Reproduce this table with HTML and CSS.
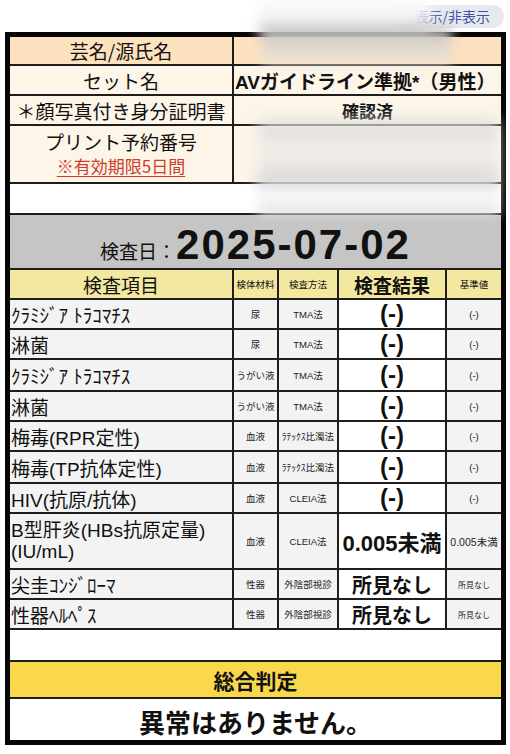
FILE: index.html
```html
<!DOCTYPE html>
<html lang="ja">
<head>
<meta charset="utf-8">
<link rel="stylesheet" href="styles.css">
</head>
<body>
<div class="top">
  <div class="toggle">表示/非表示</div>
</div>
<div class="sheet">
  <div class="grid">
    <div class="c lab peach">芸名/源氏名</div>
    <div class="c val peach span4"></div>

    <div class="c lab cream">セット名</div>
    <div class="c val cream span4 left strong">AVガイドライン準拠*（男性）</div>

    <div class="c lab cream">＊顔写真付き身分証明書</div>
    <div class="c val cream span4 mid">確認済</div>

    <div class="c lab cream stack"><span>プリント予約番号</span><span class="red">※有効期限5日間</span></div>
    <div class="c val cream span4"></div>

    <div class="c blank span5"></div>

    <div class="c date span5"><span class="dlabel">検査日：</span><span class="dval">2025-07-02</span></div>

    <div class="c hd big">検査項目</div>
    <div class="c hd small">検体材料</div>
    <div class="c hd small">検査方法</div>
    <div class="c hd big strong">検査結果</div>
    <div class="c hd small">基準値</div>

    <div class="c name">ｸﾗﾐｼﾞｱ ﾄﾗｺﾏﾁｽ</div><div class="c sm">尿</div><div class="c sm">TMA法</div><div class="c res">(-)</div><div class="c sm">(-)</div>
    <div class="c name">淋菌</div><div class="c sm">尿</div><div class="c sm">TMA法</div><div class="c res">(-)</div><div class="c sm">(-)</div>
    <div class="c name">ｸﾗﾐｼﾞｱ ﾄﾗｺﾏﾁｽ</div><div class="c sm">うがい液</div><div class="c sm">TMA法</div><div class="c res">(-)</div><div class="c sm">(-)</div>
    <div class="c name">淋菌</div><div class="c sm">うがい液</div><div class="c sm">TMA法</div><div class="c res">(-)</div><div class="c sm">(-)</div>
    <div class="c name">梅毒(RPR定性)</div><div class="c sm">血液</div><div class="c sm">ﾗﾃｯｸｽ比濁法</div><div class="c res">(-)</div><div class="c sm">(-)</div>
    <div class="c name">梅毒(TP抗体定性)</div><div class="c sm">血液</div><div class="c sm">ﾗﾃｯｸｽ比濁法</div><div class="c res">(-)</div><div class="c sm">(-)</div>
    <div class="c name">HIV(抗原/抗体)</div><div class="c sm">血液</div><div class="c sm">CLEIA法</div><div class="c res">(-)</div><div class="c sm">(-)</div>
    <div class="c name two">B型肝炎(HBs抗原定量)<br>(IU/mL)</div><div class="c sm">血液</div><div class="c sm">CLEIA法</div><div class="c res num">0.005未満</div><div class="c sm numsm">0.005未満</div>
    <div class="c name">尖圭ｺﾝｼﾞﾛｰﾏ</div><div class="c sm">性器</div><div class="c sm">外陰部視診</div><div class="c res jp">所見なし</div><div class="c sm tiny">所見なし</div>
    <div class="c name">性器ﾍﾙﾍﾟｽ</div><div class="c sm">性器</div><div class="c sm">外陰部視診</div><div class="c res jp">所見なし</div><div class="c sm tiny">所見なし</div>

    <div class="c blank span5"></div>
    <div class="c sogo span5">総合判定</div>
    <div class="c final span5">異常はありません。</div>
  </div>
</div>
<div class="blur b1"></div>
<div class="blur b1b"></div>
<div class="blur b2"></div>
<div class="blur b3"></div>
</body>
</html>
```

FILE: styles.css
```css
* { box-sizing: border-box; }
html, body { margin: 0; padding: 0; background: #fff; }
body {
  position: relative;
  width: 510px;
  height: 754px;
  overflow: hidden;
  font-family: "Liberation Sans", "Noto Sans CJK JP", sans-serif;
  color: #111;
}
.top {
  height: 32px;
  display: flex;
  justify-content: flex-end;
  align-items: center;
  padding-right: 6px;
}
.toggle {
  height: 23px;
  padding: 0 14px 0 22px;
  border-radius: 12px;
  background: #e7e9ef;
  color: #3a52a6;
  font-family: "Noto Sans CJK JP", sans-serif;
  font-size: 14px;
  line-height: 23px;
}
.sheet {
  margin-left: 5px;
  width: 501px;
  border: 5px solid #060606;
}
.grid {
  display: grid;
  grid-template-columns: 222px 43px 58px 106px 54px;
  grid-template-rows: 27px 28px 28px 56px 29px 53px 28px 28px 28px 30px 28px 28px 30px 28px 54px 28px 28px 30px 35px 41px;
  gap: 2px;
  background: #1e1e1e;
}
.c {
  display: flex;
  align-items: center;
  justify-content: center;
  overflow: hidden;
  white-space: nowrap;
  background: #f3f3f3;
}
.span4 { grid-column: span 4; }
.span5 { grid-column: span 5; }
.peach { background: #fce2bf; }
.cream { background: #fdf5e8; }
.lab { font-family: "Noto Sans CJK JP", sans-serif; font-size: 19px; }
.val { font-size: 19px; }
.left { justify-content: flex-start; padding-left: 1px; }
.strong { font-weight: bold; }
.mid { font-weight: bold; font-size: 17px; font-family: "Noto Sans CJK JP", sans-serif; }
.stack { flex-direction: column; line-height: 24px; }
.red {
  color: #cc3e2c;
  font-size: 17px;
  text-decoration: underline;
  text-underline-offset: 3px;
}
.blank { background: #fff; }
.date {
  background: #c5c5c5;
  align-items: baseline;
  padding-top: 8px;
}
.dlabel { font-family: "Noto Sans CJK JP", sans-serif; font-size: 19px; }
.dval {
  font-size: 42px;
  font-weight: bold;
  letter-spacing: 2px;
  line-height: 44px;
}
.hd { background: #f3e8a0; }
.big { font-family: "Noto Sans CJK JP", sans-serif; font-size: 19px; }
.small { font-family: "Noto Sans CJK JP", sans-serif; font-size: 9.5px; }
.name {
  justify-content: flex-start;
  padding-left: 1px;
  font-size: 19px;
}
.two { white-space: normal; line-height: 21px; }
.sm { font-size: 9.5px; color: #222; }
.res { background: #fff; font-size: 24px; font-weight: bold; }
.num { font-size: 22px; }
.jp { font-size: 20px; font-family: "Noto Sans CJK JP", sans-serif; }
.numsm { font-size: 10.5px; }
.tiny { font-size: 8px; }
.sogo {
  background: #f9d84c;
  font-family: "Noto Sans CJK JP", sans-serif;
  font-weight: bold;
  font-size: 21px;
}
.final {
  background: #fff;
  font-family: "Noto Sans CJK JP", sans-serif;
  font-weight: bold;
  font-size: 26px;
  padding-top: 4px;
}
.blur {
  position: absolute;
  pointer-events: none;
}
.b1 {
  left: 258px;
  top: -6px;
  width: 172px;
  height: 40px;
  background: linear-gradient(to bottom, rgba(255,255,255,0.96) 0%, rgba(240,240,240,0.95) 70%, rgba(200,200,200,0.9) 100%);
  filter: blur(7px);
}
.b1b {
  left: 262px;
  top: 28px;
  width: 190px;
  height: 36px;
  background: linear-gradient(to bottom, rgba(175,175,175,0.85) 0%, rgba(215,210,205,0.9) 35%, rgba(236,228,218,0.92) 100%);
  filter: blur(6px);
}
.b2 {
  left: 258px;
  top: 120px;
  width: 240px;
  height: 64px;
  background: linear-gradient(to bottom, rgba(215,215,215,0.85) 0%, rgba(240,238,234,0.92) 50%, rgba(215,215,215,0.88) 100%);
  filter: blur(7px);
}
.b3 {
  left: 258px;
  top: 180px;
  width: 240px;
  height: 36px;
  background: linear-gradient(to bottom, rgba(195,195,195,0.85) 0%, rgba(255,255,255,0.9) 40%, rgba(215,215,215,0.9) 100%);
  filter: blur(6px);
}
```
